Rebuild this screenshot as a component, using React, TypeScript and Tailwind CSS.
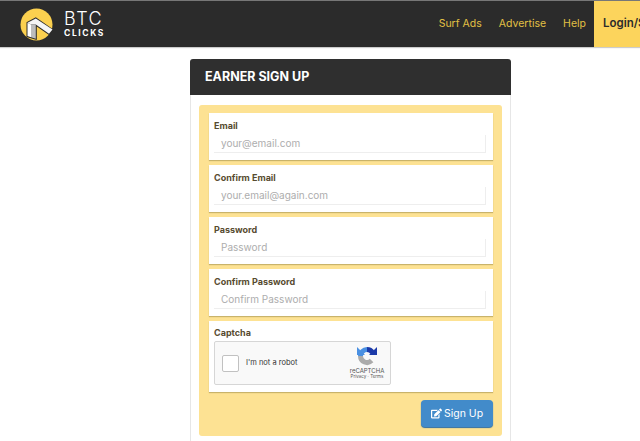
import React from 'react';
import { FaEdit } from 'react-icons/fa';

const font = "font-['Inter','Liberation_Sans',sans-serif]";

function Field({ label, placeholder }: { label: string; placeholder: string }) {
  return (
    <div className="h-[47px] bg-white px-[5px] pt-[7px] shadow-[0_1px_1px_#c9b36a]">
      <div className="text-[9px] leading-[12px] font-bold text-[#574b30]">{label}</div>
      <div className="mt-[3px] flex h-[18px] w-[272px] items-center border-b border-r border-[#eeeeee] pl-[7px] text-[10px] text-[#adadad]">
        {placeholder}
      </div>
    </div>
  );
}

function RecaptchaLogo() {
  return (
    <svg width="20" height="20" viewBox="0 0 20 20" fill="none">
      <path d="M3.5 10A6.5 6.5 0 0 1 10 3.5" stroke="#4a90e2" strokeWidth="5" />
      <path d="M10 3.5A6.5 6.5 0 0 1 15.6 6.7" stroke="#1c3aa9" strokeWidth="5" />
      <path d="M12 9h8V1z" fill="#1c3aa9" />
      <path d="M14.6 14.6A6.5 6.5 0 0 1 3.5 10" stroke="#ababab" strokeWidth="5" />
      <path d="M0 9h8L0 1z" fill="#4a90e2" />
    </svg>
  );
}

export default function App() {
  return (
    <div className={`h-[441px] w-[640px] overflow-hidden bg-white ${font}`}>
      {/* Header */}
      <header className="flex h-[47px] items-stretch border-t border-[#777777] bg-[#2b2b2b] shadow-[0_1px_1px_#cccccc]">
        <div className="flex items-center pl-[20px]">
          <svg width="33" height="33" viewBox="0 0 33 33">
            <circle cx="16.5" cy="16.5" r="16" fill="#fbd04f" />
            <path d="M6.5 14.3 15.8 9.3 33.5 21.5 29 27 16.8 18.5V32L6.5 29z" fill="#2b2b2b" />
            <path d="M7.5 14.8 15.8 10.5 32.5 21.5 29 25.8 15.8 16.5 11 16.5z" fill="#f5f5f5" />
            <path d="M7.5 14.8 11 16.5V29.2L7.5 28z" fill="#ffffff" />
            <path d="M11 16.5H15.8V30.8L11 29.2z" fill="#bdbdbd" />
          </svg>
          <div className="ml-[11px] flex flex-col text-white">
            <span className="text-[18px] leading-[18px] font-light tracking-[1.5px]">BTC</span>
            <span className="mt-[1px] text-[8.5px] leading-[9px] font-bold tracking-[1.6px]">CLICKS</span>
          </div>
        </div>
        <nav className="ml-auto flex items-center gap-[17px] pr-[8px] text-[10.5px] text-[#e2c044]">
          <span>Surf Ads</span>
          <span>Advertise</span>
          <span>Help</span>
        </nav>
        <div className="w-[46px] overflow-hidden bg-[#fcd45c] pl-[9px] text-[11.5px] leading-[45px] font-semibold whitespace-nowrap text-[#2b2b2b]">
          Login/Signup
        </div>
      </header>

      {/* Panel */}
      <main className="ml-[190px] w-[321px] pt-[12px]">
        <div className="flex h-[36px] items-center rounded-t-[3px] bg-[#2f2f2f] pl-[15px] text-[12.5px] font-bold text-white">
          EARNER SIGN UP
        </div>
        <div className="h-[400px] border-x border-[#e6e6e6] px-[8px] pt-[10px]">
          <div className="h-[331px] rounded-[3px] bg-[#fde293] pt-[8px] pl-[10px] pr-[9px]">
            <div className="flex flex-col gap-[5px]">
              <Field label="Email" placeholder="your@email.com" />
              <Field label="Confirm Email" placeholder="your.email@again.com" />
              <Field label="Password" placeholder="Password" />
              <Field label="Confirm Password" placeholder="Confirm Password" />
              <div className="h-[71px] bg-white px-[5px] pt-[6px] shadow-[0_1px_1px_#c9b36a]">
                <div className="text-[9px] leading-[12px] font-bold text-[#574b30]">Captcha</div>
                <div className="mt-[2px] flex h-[44px] w-[177px] items-center rounded-[2px] border border-[#d6d6d6] bg-[#f9f9f9] pl-[7px]">
                  <div className="h-[17px] w-[17px] rounded-[2px] border border-[#c1c1c1] bg-white" />
                  <span className="ml-[7px] text-[7.5px] text-[#333333]">I'm not a robot</span>
                  <div className="ml-auto flex w-[40px] flex-col items-center pr-[6px]">
                    <RecaptchaLogo />
                    <span className="mt-[1px] text-[6px] leading-[7px] text-[#555555]">reCAPTCHA</span>
                    <span className="text-[4.5px] leading-[6px] text-[#555555]">Privacy · Terms</span>
                  </div>
                </div>
              </div>
            </div>
            <div className="mt-[8px] flex justify-end">
              <button className="flex h-[27px] w-[72px] items-center justify-center gap-[2px] rounded-[4px] bg-[#428bca] text-[10.5px] text-white shadow-[0_1px_1px_#2f6da3]">
                <FaEdit size={11} />
                Sign Up
              </button>
            </div>
          </div>
        </div>
      </main>
    </div>
  );
}
